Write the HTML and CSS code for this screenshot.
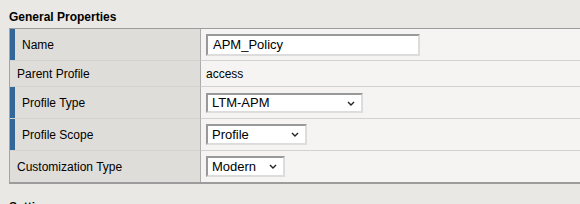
FILE: index.html
```
<!doctype html>
<html>
<head>
	<title>Profile Properties</title>
	<link rel="stylesheet" href="styles.css">
</head>
<body>
	<div class="section">
		<h2 class="section-title">General Properties</h2>
		<table class="props">
			<tr>
				<td class="label required">Name</td>
				<td class="value"><input type="text" class="field" value="APM_Policy"></td>
			</tr>
			<tr class="short">
				<td class="label">Parent Profile</td>
				<td class="value">access</td>
			</tr>
			<tr>
				<td class="label required">Profile Type</td>
				<td class="value">
					<span class="select-wrap">
						<select class="select type-select"><option>LTM-APM</option></select>
						<svg class="chevron" width="8" height="5" viewBox="0 0 8 5"><path d="M1 1 L4 4 L7 1" fill="none" stroke="#222" stroke-width="1.4"/></svg>
					</span>
				</td>
			</tr>
			<tr>
				<td class="label required">Profile Scope</td>
				<td class="value">
					<span class="select-wrap">
						<select class="select scope-select"><option>Profile</option></select>
						<svg class="chevron" width="8" height="5" viewBox="0 0 8 5"><path d="M1 1 L4 4 L7 1" fill="none" stroke="#222" stroke-width="1.4"/></svg>
					</span>
				</td>
			</tr>
			<tr class="last">
				<td class="label">Customization Type</td>
				<td class="value">
					<span class="select-wrap">
						<select class="select custom-select"><option>Modern</option></select>
						<svg class="chevron" width="8" height="5" viewBox="0 0 8 5"><path d="M1 1 L4 4 L7 1" fill="none" stroke="#222" stroke-width="1.4"/></svg>
					</span>
				</td>
			</tr>
		</table>
	</div>
	<div class="section next">
		<h2 class="section-title">Settings</h2>
	</div>
</body>
</html>
```
FILE: styles.css
```
body
{
	margin:0;
	padding:0 0 0 9px;
	background-color:#e9e8e4;
	font-family:"Liberation Sans", Arial, sans-serif;
	font-size:12px;
	color:#000;
	overflow:hidden;
}
.section-title
{
	margin:0;
	padding:10px 0 4px 0;
	font-size:12px;
	line-height:14px;
	font-weight:bold;
}
.next
{
	margin-top:6px;
}
.props
{
	width:100%;
	border-collapse:separate;
	border-spacing:0;
	border-top:1px solid #9c9c9c;
	border-left:1px solid #a4a4a4;
	border-bottom:2px solid #9c9c9c;
}
.props td
{
	height:32px;
	padding:0;
	box-sizing:border-box;
	border-bottom:1px solid #d4d2ce;
	vertical-align:middle;
}
.props tr.short td
{
	height:26px;
}
.props tr.last td
{
	height:31px;
	border-bottom:none;
}
.label
{
	width:191px;
	padding-left:7px !important;
	background-color:#dfddd9;
	border-right:1px solid #ababab;
}
.label.required
{
	padding-left:12px !important;
	box-shadow:inset 5px 0 0 #336699;
}
.value
{
	padding-left:5px !important;
	background-color:#f5f4f2;
}
.field
{
	box-sizing:border-box;
	width:214px;
	height:22px;
	margin:0;
	padding:0 0 0 5px;
	font-family:"Liberation Sans", Arial, sans-serif;
	font-size:13px;
	color:#000;
	background-color:#fff;
	border-style:solid;
	border-width:2px;
	border-color:#999 #dcdcdc #dcdcdc #999;
	outline:none;
	vertical-align:middle;
}
.select-wrap
{
	position:relative;
	display:inline-block;
	vertical-align:middle;
}
.select
{
	-webkit-appearance:none;
	appearance:none;
	box-sizing:border-box;
	height:21px;
	margin:0;
	padding:0 0 0 4px;
	font-family:"Liberation Sans", Arial, sans-serif;
	font-size:13px;
	color:#000;
	background-color:#fff;
	border-style:solid;
	border-width:2px;
	border-color:#999 #dcdcdc #dcdcdc #999;
	border-radius:0;
	display:block;
}
.type-select
{
	width:157px;
	height:20px;
}
.scope-select
{
	width:101px;
}
.custom-select
{
	width:79px;
}
.chevron
{
	position:absolute;
	right:8px;
	top:8px;
	pointer-events:none;
}
```
